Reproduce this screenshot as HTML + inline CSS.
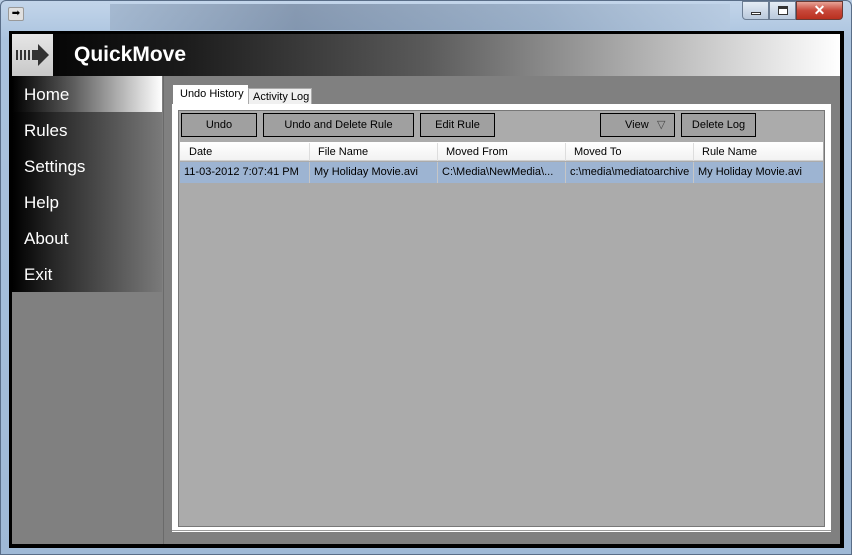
<!DOCTYPE html>
<html><head><style>
*{margin:0;padding:0;box-sizing:border-box}
body{width:852px;height:555px;overflow:hidden;background:#b9cde4;font-family:"Liberation Sans",sans-serif;position:relative}
.abs{position:absolute;white-space:nowrap}
.frame{left:0;top:0;width:852px;height:555px;background:linear-gradient(180deg,#c3d5ea 0,#aac3de 40px,#9fb9d6 100%);border:1px solid #5a6e88;border-radius:6px 6px 0 0}
.blur{left:110px;top:4px;width:620px;height:26px;background:linear-gradient(90deg,#9aaec6,#6f819a 30%,#8ea3bc 70%,#b6c9df);opacity:.7}
.client{left:9px;top:31px;width:835px;height:517px;background:#000}
.inner{left:12px;top:34px;width:828px;height:510px;background:#808080}
.hdr{left:12px;top:34px;width:828px;height:42px;background:linear-gradient(90deg,#000 0,#1a1a1a 20%,#5a5a5a 50%,#bdbdbd 80%,#fff 100%)}
.logo{left:12px;top:34px;width:41px;height:42px;background:linear-gradient(#e6e6e6,#c8c8c8)}
.title{left:74px;top:43px;color:#fff;font-weight:bold;font-size:21px}
.menu{left:12px;top:112px;width:150px;height:180px;background:linear-gradient(90deg,#000,#2a2a2a 30%,#7a7a7a)}
.home{left:12px;top:76px;width:150px;height:36px;background:linear-gradient(90deg,#000,#5a5a5a 40%,#fff)}
.mi{left:24px;color:#fff;font-size:17px}
.sep{left:163px;top:76px;width:1px;height:468px;background:#6a6a6a}
.tabs{font-size:11px;color:#000}
.btn{position:absolute;top:113px;height:24px;border:1px solid #000;background:#a0a0a0;font-size:11px;text-align:center;line-height:22px;white-space:nowrap}
.th{position:absolute;top:143px;height:18px;font-size:11px;line-height:18px;padding-left:8px;border-right:1px solid #ddd;white-space:nowrap}
.td{position:absolute;top:162px;height:21px;font-size:11px;line-height:21px;padding-left:4px;border-right:1px solid #c6c6c6;white-space:nowrap;overflow:hidden}
</style></head><body>
<div class="abs frame"></div>
<div class="abs blur"></div>
<div class="abs" style="left:8px;top:7px;width:16px;height:14px;background:#e0e0e0;border:1px solid #999;border-radius:2px;font-size:10px;line-height:11px;text-align:center">➡</div>
<div class="abs" style="left:742px;top:1px;width:27px;height:19px;background:linear-gradient(#e4ecf5,#b9c9dc);border:1px solid #6b7d93;border-radius:0 0 0 4px"><div class="abs" style="left:8px;top:10px;width:10px;height:3px;background:#fff;border:1px solid #333"></div></div>
<div class="abs" style="left:769px;top:1px;width:27px;height:19px;background:linear-gradient(#e4ecf5,#b9c9dc);border:1px solid #6b7d93"><div class="abs" style="left:8px;top:4px;width:10px;height:9px;border:1px solid #333;border-top-width:3px;background:#fff"></div></div>
<div class="abs" style="left:796px;top:1px;width:47px;height:19px;background:linear-gradient(#e8a497,#c8483a 50%,#b9301f);border:1px solid #6b3a34;border-radius:0 0 4px 0;color:#fff;font-weight:bold;font-size:14px;text-align:center;line-height:17px">✕</div>
<div class="abs client"></div>
<div class="abs inner"></div>
<div class="abs hdr"></div>
<div class="abs logo"><svg width="41" height="42"><g fill="#333"><rect x="4" y="16" width="2" height="10"/><rect x="8" y="16" width="2" height="10"/><rect x="12" y="16" width="2" height="10"/><rect x="16" y="16" width="2" height="10"/><path d="M20 16h6v-6l11 11-11 11v-6h-6z"/></g></svg></div>
<div class="abs title">QuickMove</div>
<div class="abs home"></div>
<div class="abs menu"></div>
<div class="abs mi" style="top:85px">Home</div>
<div class="abs mi" style="top:121px">Rules</div>
<div class="abs mi" style="top:157px">Settings</div>
<div class="abs mi" style="top:193px">Help</div>
<div class="abs mi" style="top:229px">About</div>
<div class="abs mi" style="top:265px">Exit</div>
<div class="abs sep"></div>
<div class="abs" style="left:172px;top:104px;width:659px;height:428px;background:#fff"></div>
<div class="abs" style="left:172px;top:530px;width:659px;height:1px;background:#9a9a9a"></div>
<div class="abs tabs" style="left:173px;top:85px;width:75px;height:20px;background:#fff;padding:3px 0 0 7px">Undo History</div>
<div class="abs tabs" style="left:248px;top:88px;width:64px;height:16px;background:#f0f0f0;border:1px solid #aaa;border-bottom:none;padding:2px 0 0 4px">Activity Log</div>
<div class="abs" style="left:178px;top:110px;width:647px;height:417px;background:#ababab;border:1px solid #777"></div>
<div class="btn" style="left:181px;width:76px">Undo</div>
<div class="btn" style="left:263px;width:151px">Undo and Delete Rule</div>
<div class="btn" style="left:420px;width:75px">Edit Rule</div>
<div class="btn" style="left:600px;width:75px;text-align:left;padding-left:24px">View <span style="position:absolute;left:56px;top:0;color:#444">▽</span></div>
<div class="btn" style="left:681px;width:75px">Delete Log</div>
<div class="abs" style="left:180px;top:142px;width:643px;height:19px;background:linear-gradient(#fff,#f2f2f2);border-bottom:1px solid #d0d0d0"></div>
<div class="th" style="left:181px;width:129px">Date</div>
<div class="th" style="left:310px;width:128px">File Name</div>
<div class="th" style="left:438px;width:128px">Moved From</div>
<div class="th" style="left:566px;width:128px">Moved To</div>
<div class="th" style="left:694px;width:128px;border:none">Rule Name</div>
<div class="abs" style="left:180px;top:162px;width:643px;height:21px;background:#9db4d2"></div>
<div class="td" style="left:180px;width:130px">11-03-2012 7:07:41 PM</div>
<div class="td" style="left:310px;width:128px">My Holiday Movie.avi</div>
<div class="td" style="left:438px;width:128px">C:\Media\NewMedia\...</div>
<div class="td" style="left:566px;width:128px">c:\media\mediatoarchive</div>
<div class="td" style="left:694px;width:128px;border:none">My Holiday Movie.avi</div>
</body></html>
